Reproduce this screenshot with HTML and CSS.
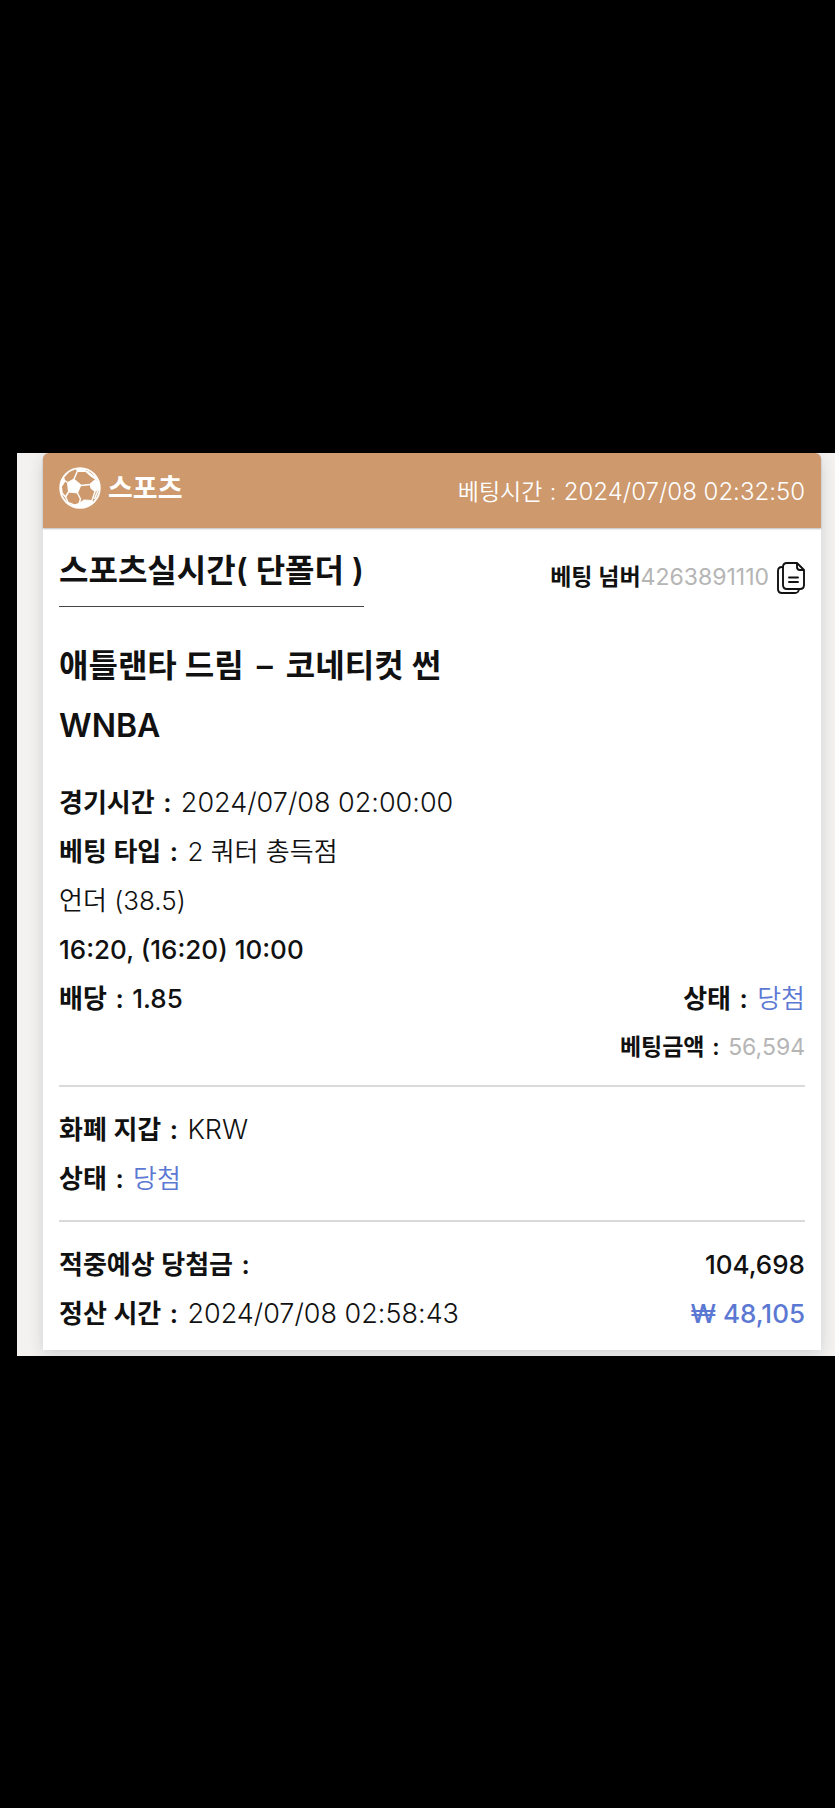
FILE: index.html
```html
<!DOCTYPE html>
<html lang="ko">
<head>
<meta charset="utf-8">
<meta name="viewport" content="width=device-width, initial-scale=1">
<title>스포츠 베팅 내역</title>
<link rel="stylesheet" href="styles.css">
</head>
<body>
<main class="panel">
  <article class="card">
    <header class="card-header">
      <div class="sport">
        <svg class="ball" viewBox="0 0 42 42" aria-hidden="true">
          <circle cx="21" cy="21" r="19.8" fill="none" stroke="#fff" stroke-width="1.800"/>
          <g fill="#fff" stroke="#fff" stroke-width="1" stroke-linejoin="round">
            <path d="M8.500 15.500 15 12 22 18 18.500 26 9.500 25Z"/>
            <path d="M31 17 37 12 40 17 40 22 36 24.500 32 21.500Z"/>
            <path d="M20 36.500 25 33 33 33.500 34 35.500Q29 40.500 20 40.500L13 38.500Z"/>
            <path d="M17 1.500 27 2.500 26.500 4.500 18.500 4.500Z"/>
            <path d="M1.500 18 5 11 5.500 15 3 19Z"/>
          </g>
          <g fill="none" stroke="#fff" stroke-width="1.500">
            <path d="M15 12 18.500 4M5 13 8.500 15.500M22 18.500 31 17.500M26.500 4 32 9 37 12M18.500 26 21.500 32 20 37M9.500 25 6.500 30M2 18 3 26 6.500 30 9 35.500 15 38M36 24.500 33 33.500M28 4 38.500 12.500M39.500 22 35.500 32"/>
          </g>
        </svg>
        <strong class="sport-name">스포츠</strong>
      </div>
      <div class="bet-time">베팅시간 <span class="colon">:</span> <time>2024/07/08 02:32:50</time></div>
    </header>
    <div class="card-body">
      <div class="title-row">
        <h1 class="title">스포츠실시간( 단폴더 )</h1>
        <div class="bet-number">
          <b>베팅 넘버</b><span class="muted">4263891110</span>
          <button class="copy" type="button" aria-label="복사">
            <svg viewBox="0 0 28 32" aria-hidden="true" fill="none" stroke="#111" stroke-width="1.900" stroke-linejoin="round" stroke-linecap="round">
              <path d="M10 1H20L27 8V23Q27 27 23 27H10Q6 27 6 23V5Q6 1 10 1ZM20 1V5Q20 8 23 8H27"/>
              <path d="M6 5H5Q1 5 1 9V27Q1 31 5 31H18Q21.500 31 22 27M12 15.500H21M12 20H21"/>
            </svg>
          </button>
        </div>
      </div>
      <section class="match">
        <h2>애틀랜타 드림 <span class="versus">–</span> 코네티컷 썬</h2>
        <h2>WNBA</h2>
      </section>
      <section class="details">
        <p><b>경기시간 <span class="colon">:</span></b> <time class="date">2024/07/08 02:00:00</time></p>
        <p><b>베팅 타입 <span class="colon">:</span></b> 2 쿼터 총득점</p>
        <p>언더 (38.5)</p>
        <p><b class="figure">16:20, (16:20) 10:00</b></p>
        <p class="row"><b>배당 <span class="colon">:</span> <span class="figure">1.85</span></b><span><b>상태 <span class="colon">:</span></b> <span class="win">당첨</span></span></p>
        <p class="amount"><b>베팅금액 <span class="colon">:</span></b> <span class="muted">56,594</span></p>
      </section>
      <section class="group">
        <p><b>화폐 지갑 <span class="colon">:</span></b> <span class="date">KRW</span></p>
        <p><b>상태 <span class="colon">:</span></b> <span class="win">당첨</span></p>
      </section>
      <section class="group">
        <p class="row"><b>적중예상 당첨금 <span class="colon">:</span></b><b class="figure">104,698</b></p>
        <p class="row"><span><b>정산 시간 <span class="colon">:</span></b> <time class="date">2024/07/08 02:58:43</time></span><b class="figure win">₩ 48,105</b></p>
      </section>
    </div>
  </article>
</main>
</body>
</html>
```
FILE: styles.css
```css
* {
  box-sizing: border-box;
}

body {
  margin: 0;
  background: #000;
  color: #111;
  font-family: Inter, "Noto Sans CJK KR", sans-serif;
  font-size: 26px;
  font-weight: 350;
  line-height: 49px;
}

h1, h2, p {
  margin: 0;
}

b, h1, h2, .sport-name {
  font-weight: 600;
}

.panel {
  margin: 453px 0 0 17px;
  padding: 0 14px 6px 26px;
  background: #f3f2f0;
  overflow: hidden;
}

.card {
  background: #fff;
  border-radius: 8px 8px 0 0;
  box-shadow: 0 4px 16px rgba(40, 30, 70, 0.16);
}

.card-header {
  display: flex;
  align-items: center;
  justify-content: space-between;
  height: 75px;
  padding: 0 16px;
  border-radius: 6px 6px 0 0;
  background: #cd996d;
  box-shadow: 0 1px 2px rgba(0, 0, 0, 0.25);
  color: #fff;
}

.sport {
  display: flex;
  align-items: center;
  gap: 7px;
  padding-bottom: 5px;
}

.sport-name {
  font-size: 27px;
}

.ball {
  width: 42px;
  height: 42px;
}

.bet-time,
.bet-number,
.amount {
  font-size: 23px;
}

.bet-time {
  padding-top: 2px;
}

.bet-time time {
  font-size: 24px;
}

.colon {
  margin: 0 2px;
}

.bet-time .colon {
  margin: 0 1px;
}

.date {
  font-size: 27px;
  line-height: 1;
}

.figure {
  font-weight: 500;
}

.card-body {
  padding: 18px 16px 12px;
}

.title-row {
  display: flex;
  align-items: center;
  justify-content: space-between;
}

.title {
  padding-bottom: 10px;
  border-bottom: 1px solid #444;
  font-size: 32px;
  line-height: 50px;
}

.bet-number {
  display: flex;
  align-items: center;
  padding-top: 2px;
}

.muted {
  color: #b5b5b5;
  font-weight: 400;
}

.copy {
  display: flex;
  margin-left: 8px;
  padding: 0;
  border: 0;
  background: none;
}

.copy svg {
  width: 28px;
  height: 32px;
}

.match {
  padding: 29px 0 22px;
}

.match h2 {
  font-size: 32px;
  line-height: 60px;
}

.versus {
  margin: 0 5px;
}

.row {
  display: flex;
  justify-content: space-between;
}

.win {
  color: #5b78d3;
}

.amount {
  text-align: right;
}

.details {
  padding-bottom: 13px;
}

.group {
  padding: 18px 0 17px;
  border-top: 2px solid #dadada;
}

.group:last-child {
  padding-bottom: 0;
}
```
